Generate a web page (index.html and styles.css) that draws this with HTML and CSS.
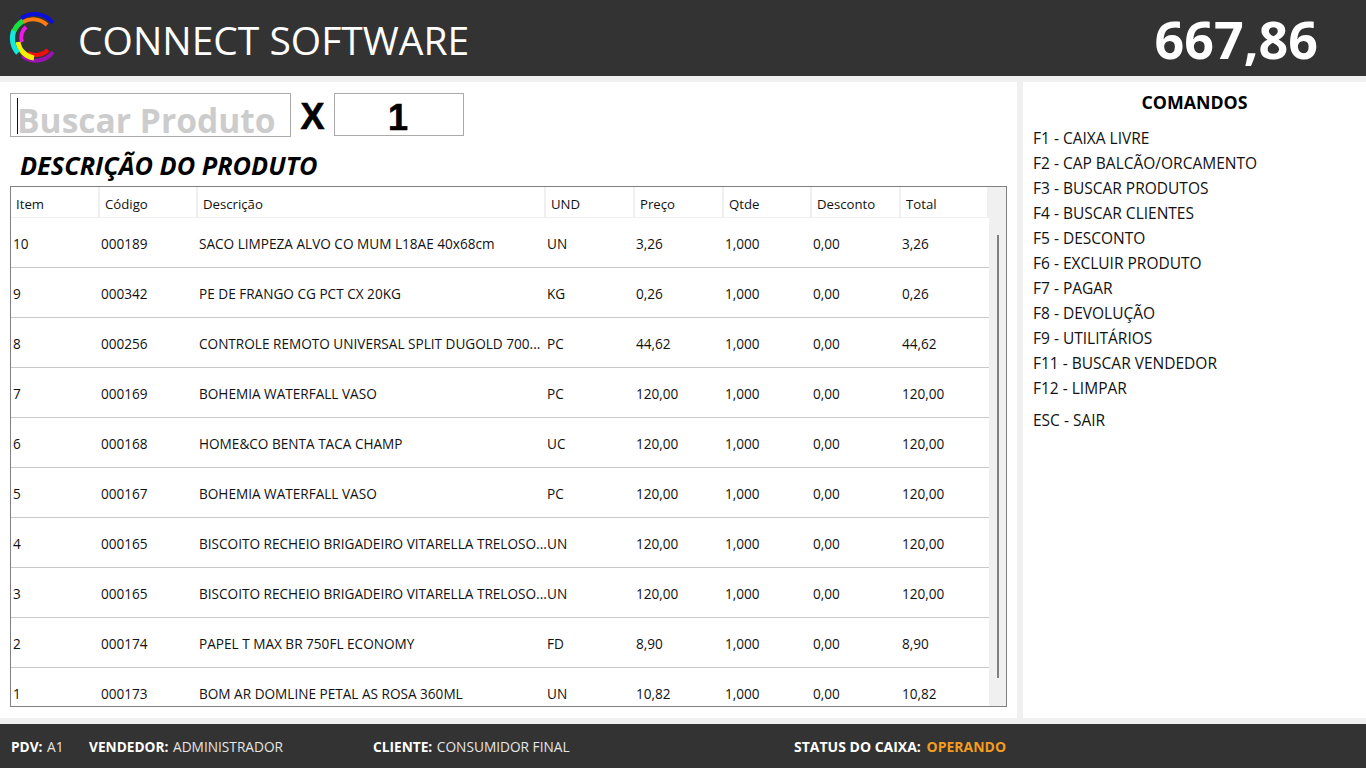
FILE: index.html
```html
<!DOCTYPE html>
<html lang="pt-BR">
<head>
  <meta charset="UTF-8" />
  <title>Connect Software - PDV</title>
  <link rel="stylesheet" href="styles.css">
</head>
<body>
  <header class="topbar">
    <svg class="logo" width="60" height="76" viewBox="0 0 60 76" fill="none" stroke-width="4">
      <path d="M20 18.5 A23 23 0 0 1 52 23" stroke="#0a10d8" />
      <path d="M21 56 A22 22 0 0 0 52 52" stroke="#9a12b0" />
      <path d="M22 22 A20 20 0 0 1 46 25" stroke="#ff7a10" />
      <path d="M21 42 A14 14 0 0 1 25 27" stroke="#f018e8" />
      <path d="M27 53 A17 17 0 0 0 47 50" stroke="#f01010" />
      <path d="M17 42 A19 19 0 0 0 33 58" stroke="#f4f000" stroke-width="5" />
      <path d="M17 53 A22 22 0 0 1 13 30" stroke="#10e8e0" stroke-width="5" />
      <path d="M13 31 A22 22 0 0 1 22 21" stroke="#18e040" stroke-width="5" />
    </svg>
    <h1 class="brand">CONNECT SOFTWARE</h1>
    <div class="total">667,86</div>
  </header>

  <main class="content">
    <section class="sale">
      <div class="search-row">
        <div class="search-box"><span class="caret"></span>Buscar Produto</div>
        <span class="times">X</span>
        <div class="qty-box">1</div>
      </div>
      <h2 class="product-title">DESCRIÇÃO DO PRODUTO</h2>

      <div class="grid-wrap">
        <div class="grid-scroll">
          <table class="grid">
            <colgroup>
              <col class="c-item"><col class="c-code"><col class="c-desc"><col class="c-und">
              <col class="c-price"><col class="c-qty"><col class="c-disc"><col class="c-total">
            </colgroup>
            <thead>
              <tr><th>Item</th><th>Código</th><th>Descrição</th><th>UND</th><th>Preço</th><th>Qtde</th><th>Desconto</th><th>Total</th></tr>
            </thead>
            <tbody>
              <tr><td>10</td><td>000189</td><td>SACO LIMPEZA ALVO CO MUM L18AE 40x68cm</td><td>UN</td><td>3,26</td><td>1,000</td><td>0,00</td><td>3,26</td></tr>
              <tr><td>9</td><td>000342</td><td>PE DE FRANGO CG PCT CX 20KG</td><td>KG</td><td>0,26</td><td>1,000</td><td>0,00</td><td>0,26</td></tr>
              <tr><td>8</td><td>000256</td><td>CONTROLE REMOTO UNIVERSAL SPLIT DUGOLD 700...</td><td>PC</td><td>44,62</td><td>1,000</td><td>0,00</td><td>44,62</td></tr>
              <tr><td>7</td><td>000169</td><td>BOHEMIA WATERFALL VASO</td><td>PC</td><td>120,00</td><td>1,000</td><td>0,00</td><td>120,00</td></tr>
              <tr><td>6</td><td>000168</td><td>HOME&amp;CO BENTA TACA CHAMP</td><td>UC</td><td>120,00</td><td>1,000</td><td>0,00</td><td>120,00</td></tr>
              <tr><td>5</td><td>000167</td><td>BOHEMIA WATERFALL VASO</td><td>PC</td><td>120,00</td><td>1,000</td><td>0,00</td><td>120,00</td></tr>
              <tr><td>4</td><td>000165</td><td>BISCOITO RECHEIO BRIGADEIRO VITARELLA TRELOSO...</td><td>UN</td><td>120,00</td><td>1,000</td><td>0,00</td><td>120,00</td></tr>
              <tr><td>3</td><td>000165</td><td>BISCOITO RECHEIO BRIGADEIRO VITARELLA TRELOSO...</td><td>UN</td><td>120,00</td><td>1,000</td><td>0,00</td><td>120,00</td></tr>
              <tr><td>2</td><td>000174</td><td>PAPEL T MAX BR 750FL ECONOMY</td><td>FD</td><td>8,90</td><td>1,000</td><td>0,00</td><td>8,90</td></tr>
              <tr><td>1</td><td>000173</td><td>BOM AR DOMLINE PETAL AS ROSA 360ML</td><td>UN</td><td>10,82</td><td>1,000</td><td>0,00</td><td>10,82</td></tr>
            </tbody>
          </table>
        </div>
        <div class="scrollbar"><div class="thumb"></div></div>
      </div>
    </section>

    <aside class="commands">
      <h3>COMANDOS</h3>
      <ul>
        <li>F1 - CAIXA LIVRE</li>
        <li>F2 - CAP BALCÃO/ORCAMENTO</li>
        <li>F3 - BUSCAR PRODUTOS</li>
        <li>F4 - BUSCAR CLIENTES</li>
        <li>F5 - DESCONTO</li>
        <li>F6 - EXCLUIR PRODUTO</li>
        <li>F7 - PAGAR</li>
        <li>F8 - DEVOLUÇÃO</li>
        <li>F9 - UTILITÁRIOS</li>
        <li>F11 - BUSCAR VENDEDOR</li>
        <li>F12 - LIMPAR</li>
        <li class="exit">ESC - SAIR</li>
      </ul>
    </aside>
  </main>

  <footer class="statusbar">
    <div class="stat stat-pdv"><b>PDV:</b> A1</div>
    <div class="stat stat-seller"><b>VENDEDOR:</b> ADMINISTRADOR</div>
    <div class="stat stat-client"><b>CLIENTE:</b> CONSUMIDOR FINAL</div>
    <div class="stat stat-status"><b>STATUS DO CAIXA:</b> <b class="operando">OPERANDO</b></div>
  </footer>
</body>
</html>
```

FILE: styles.css
```css
* {
  box-sizing: border-box;
}

body {
  margin: 0;
  width: 1366px;
  height: 768px;
  overflow: hidden;
  display: grid;
  grid-template-rows: 76px 636px 44px;
  row-gap: 6px;
  background: #f0f0f0;
  font-family: "Open Sans", "Noto Sans", sans-serif;
  color: #111;
}

/* top bar */
.topbar {
  background: #333333;
  color: #fff;
  display: flex;
  align-items: center;
}

.logo {
  flex: none;
  margin-left: 1px;
}

.brand {
  margin: 2px 0 0 17px;
  font-size: 39px;
  font-weight: 400;
}

.total {
  margin-left: auto;
  margin-right: 48px;
  font-size: 52px;
  font-weight: 700;
}

/* main area */
.content {
  display: grid;
  grid-template-columns: 1017px 343px;
  column-gap: 6px;
}

.sale {
  background: #fff;
  padding: 11px 10px 0;
}

.search-row {
  display: flex;
  align-items: flex-start;
}

.search-box {
  position: relative;
  width: 281px;
  height: 44px;
  border: 1px solid #aaa;
  padding-left: 6px;
  font-size: 33.6px;
  line-height: 52px;
  font-weight: 700;
  color: #cccccc;
  white-space: nowrap;
}

.caret {
  position: absolute;
  left: 6px;
  top: 4px;
  height: 36px;
  border-left: 1px solid #111;
}

.times {
  width: 43px;
  text-align: center;
  font-family: "Liberation Sans", Arial, sans-serif;
  font-size: 36px;
  font-weight: 700;
  line-height: 48px;
  color: #000;
  -webkit-text-stroke: 0.6px #000;
}

.qty-box {
  width: 130px;
  height: 43px;
  border: 1px solid #aaa;
  padding-right: 2px;
  text-align: center;
  font-family: "Liberation Sans", Arial, sans-serif;
  font-size: 36px;
  font-weight: 700;
  line-height: 48px;
  color: #000;
  -webkit-text-stroke: 0.6px #000;
}

.product-title {
  margin: 7px 0 4px 10px;
  font-size: 25.3px;
  line-height: 34px;
  font-style: italic;
  font-weight: 700;
  color: #000;
}

/* grid */
.grid-wrap {
  width: 997px;
  height: 521px;
  border: 1px solid #808080;
  display: flex;
}

.grid-scroll {
  width: 978px;
  overflow: hidden;
}

.grid {
  width: 978px;
  table-layout: fixed;
  border-collapse: separate;
  border-spacing: 0;
  font-size: 13.6px;
}

.c-item { width: 89px; }
.c-code { width: 98px; }
.c-desc { width: 348px; }
.c-und { width: 89px; }
.c-price { width: 89px; }
.c-qty { width: 88px; }
.c-disc { width: 89px; }
.c-total { width: 88px; }

.grid th {
  height: 31px;
  padding: 3px 0 0 5px;
  text-align: left;
  font-size: 13.2px;
  font-weight: 400;
  border-right: 2px solid #f0f0f0;
  border-bottom: 1px solid #f0f0f0;
}

.grid td {
  height: 50px;
  padding: 1px 0 0 1px;
  border-bottom: 1px solid #c8c8c8;
  white-space: nowrap;
}

.grid td:first-child {
  padding-left: 2px;
}

.scrollbar {
  flex: 1;
  background: #f0f0f0;
  padding: 48px 0 0 8px;
}

.thumb {
  width: 2px;
  height: 443px;
  background: #808080;
}

/* commands */
.commands {
  background: #fff;
  padding: 8px 10px 0;
}

.commands h3 {
  margin: 0 0 12px;
  text-align: center;
  font-size: 17.8px;
  line-height: 24px;
  font-weight: 700;
  color: #000;
}

.commands ul {
  margin: 0;
  padding: 0;
  list-style: none;
}

.commands li {
  font-size: 15.5px;
  line-height: 25px;
}

.commands .exit {
  margin-top: 7px;
}

/* status bar */
.statusbar {
  background: #333333;
  color: #e6e6e6;
  display: flex;
  align-items: center;
  font-size: 13.7px;
}

.stat b {
  color: #fff;
  margin-right: 1px;
}

.stat .operando {
  color: #f39c1f;
}

.stat-pdv { margin-left: 11px; width: 78px; }
.stat-seller { width: 284px; }
.stat-client { width: 421px; }
.stat-status { font-size: 14px; }
.stat-status b { margin-right: 2px; }
```
